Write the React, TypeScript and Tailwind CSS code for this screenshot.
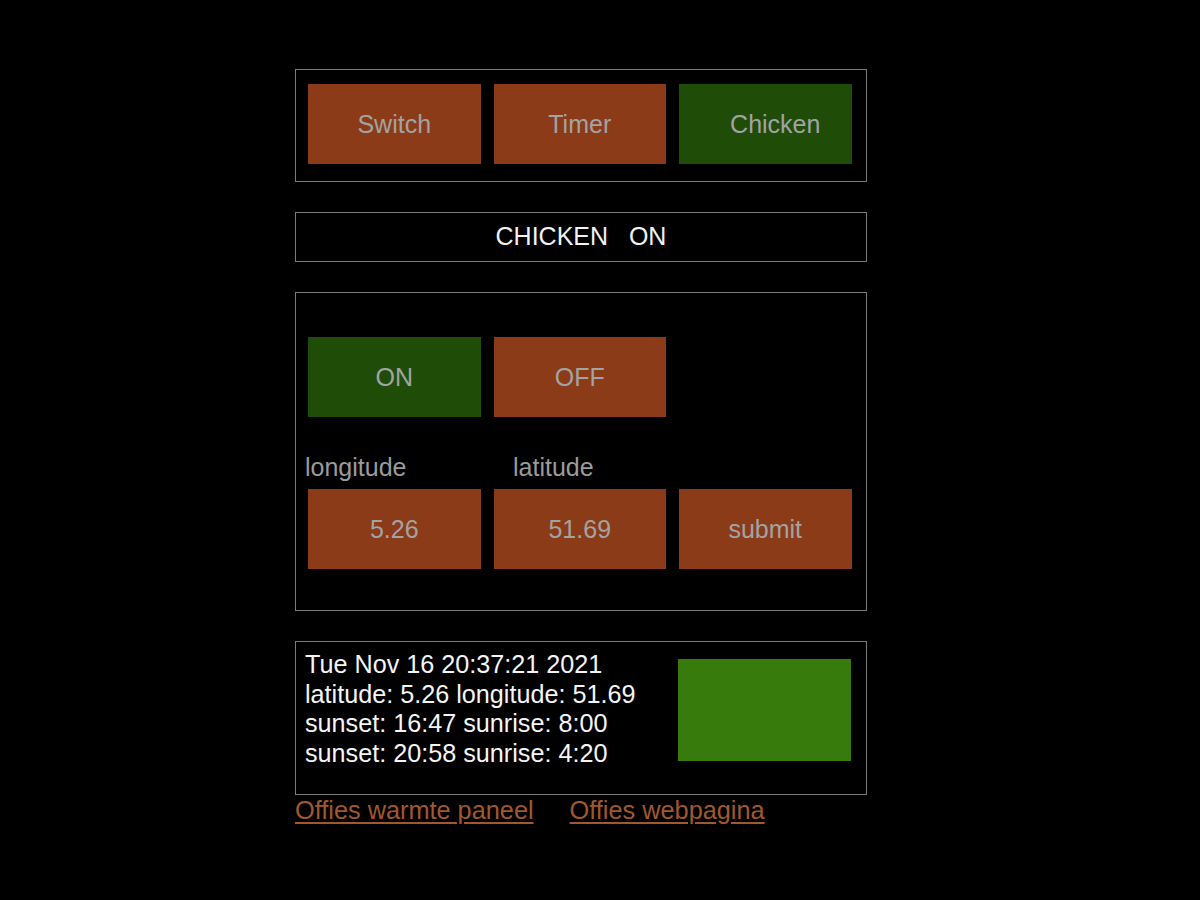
import React from "react";

const orange = "bg-[#8b3b18]";
const green = "bg-[#1f4c07]";

function Btn({ label, on, extra }: { label: string; on?: boolean; extra?: string }) {
  return (
    <div
      className={`w-[172.5px] h-[80px] flex items-center justify-center pt-[1px] text-[25px] text-[#a3a3a3] ${on ? green : orange} ${extra ?? ""}`}
    >
      {label}
    </div>
  );
}

export default function App() {
  return (
    <div
      className="min-h-[900px] w-full bg-black"
      style={{ fontFamily: '"Liberation Sans", Arial, sans-serif' }}
    >
      <div className="w-[572px] ml-[295px] pt-[69px] flex flex-col">
        {/* Panel 1 */}
        <div className="border border-[#7a7a7a] pt-[14px] pb-[17px] pl-[12px] flex gap-[13px]">
          <Btn label="Switch" />
          <Btn label="Timer" />
          <Btn label="Chicken" on extra="pl-[20px]" />
        </div>

        {/* Panel 2 */}
        <div className="mt-[30px] h-[50px] border border-[#7a7a7a] flex items-center justify-center text-[25px] text-[#f2f2f2] whitespace-pre">
          {"CHICKEN   ON"}
        </div>

        {/* Panel 3 */}
        <div className="mt-[30px] h-[319px] border border-[#7a7a7a] pt-[44px] pl-[12px]">
          <div className="flex gap-[13px]">
            <Btn label="ON" on />
            <Btn label="OFF" />
          </div>
          <div className="flex mt-[36px] h-[30px] items-center text-[25px] text-[#9b9b9b] ml-[-3px]">
            <span className="w-[208px]">longitude</span>
            <span>latitude</span>
          </div>
          <div className="flex gap-[13px] mt-[6px]">
            <Btn label="5.26" />
            <Btn label="51.69" />
            <Btn label="submit" />
          </div>
        </div>

        {/* Panel 4 */}
        <div className="mt-[30px] h-[154px] border border-[#7a7a7a] flex">
          <div className="pl-[9px] pt-[8px] w-[382px] text-[25.2px] leading-[29.5px] text-[#f5f5f5]">
            <div>Tue Nov 16 20:37:21 2021</div>
            <div>latitude: 5.26 longitude: 51.69</div>
            <div>sunset: 16:47 sunrise: 8:00</div>
            <div>sunset: 20:58 sunrise: 4:20</div>
          </div>
          <div className="mt-[17px] w-[173px] h-[102px] bg-[#367b0c]" />
        </div>

        {/* Links */}
        <div className="flex text-[25.3px] leading-[28px] text-[#a0582f] mt-[1px]">
          <a href="#" className="underline underline-offset-[3px] mr-[36px]">Offies warmte paneel</a>
          <a href="#" className="underline underline-offset-[3px]">Offies webpagina</a>
        </div>
      </div>
    </div>
  );
}
